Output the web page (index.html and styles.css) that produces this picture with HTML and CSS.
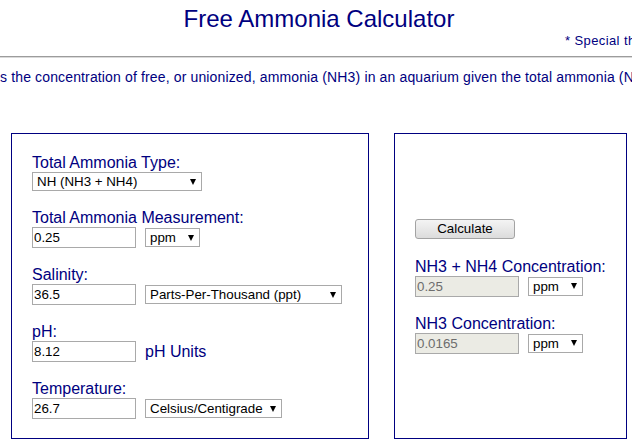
FILE: index.html
```html
<!DOCTYPE html>
<html lang="en">
<head>
<meta charset="utf-8">
<title>Free Ammonia Calculator</title>
<link rel="stylesheet" href="styles.css">
</head>
<body>
<h1 class="title">Free Ammonia Calculator</h1>
<p class="thanks">* Special thanks to the aquarium hobby community for the formulas used here.</p>
<hr class="rule">
<p class="intro"><span class="intro-lead">This calculator determine</span><span class="intro-rest">s the concentration of free, or unionized, ammonia (NH3) in an aquarium given the total ammonia (NH3 + NH4), pH, salinity and temperature.</span></p>

<div class="panels">
  <form class="panel panel-inputs">
    <div class="field">
      <label class="label">Total Ammonia Type:</label>
      <div class="row">
        <span class="sel"><select class="select w-type"><option>NH (NH3 + NH4)</option></select></span>
      </div>
    </div>
    <div class="field">
      <label class="label">Total Ammonia Measurement:</label>
      <div class="row">
        <input class="input" type="text" value="0.25">
        <span class="sel"><select class="select w-unit"><option>ppm</option></select></span>
      </div>
    </div>
    <div class="field">
      <label class="label">Salinity:</label>
      <div class="row">
        <input class="input" type="text" value="36.5">
        <span class="sel"><select class="select w-sal"><option>Parts-Per-Thousand (ppt)</option></select></span>
      </div>
    </div>
    <div class="field">
      <label class="label">pH:</label>
      <div class="row">
        <input class="input" type="text" value="8.12">
        <span class="unit-text">pH Units</span>
      </div>
    </div>
    <div class="field">
      <label class="label">Temperature:</label>
      <div class="row">
        <input class="input" type="text" value="26.7">
        <span class="sel"><select class="select w-temp"><option>Celsius/Centigrade</option></select></span>
      </div>
    </div>
  </form>

  <div class="panel panel-results">
    <button class="btn" type="button">Calculate</button>
    <div class="field">
      <label class="label">NH3 + NH4 Concentration:</label>
      <div class="row">
        <input class="input input-ro" type="text" value="0.25" readonly>
        <span class="sel"><select class="select w-unit"><option>ppm</option></select></span>
      </div>
    </div>
    <div class="field">
      <label class="label">NH3 Concentration:</label>
      <div class="row">
        <input class="input input-ro" type="text" value="0.0165" readonly>
        <span class="sel"><select class="select w-unit"><option>ppm</option></select></span>
      </div>
    </div>
  </div>
</div>
</body>
</html>
```

FILE: styles.css
```css
body {
  margin: 0;
  overflow: hidden;
  font-family: "Liberation Sans", Arial, sans-serif;
  color: #000080;
  background: #ffffff;
}

.title {
  margin: 0;
  padding: 5px 0 0 6px;
  font-size: 24px;
  line-height: 28px;
  font-weight: normal;
  text-align: center;
}

.thanks {
  margin: 0;
  padding-left: 565px;
  font-size: 13px;
  line-height: 15px;
  letter-spacing: 0.4px;
  white-space: nowrap;
}

.rule {
  margin: 8px 0 0;
  height: 0;
  border: 0;
  border-top: 1px solid #9c9c9c;
  border-bottom: 1px solid #dadada;
}

.intro {
  display: flex;
  margin: 11px 0 0;
  font-size: 14px;
  line-height: 16px;
  letter-spacing: 0.14px;
  white-space: nowrap;
}

.intro-lead {
  display: flex;
  justify-content: flex-end;
  width: 0;
  overflow: visible;
}

.intro-rest {
  flex-shrink: 0;
}

.panels {
  display: flex;
  gap: 25px;
  margin-top: 48px;
  padding-left: 11px;
}

.panel {
  margin: 0;
  box-sizing: border-box;
  border: 1px solid #000080;
  display: flex;
  flex-direction: column;
  gap: 17px;
}

.panel-inputs {
  width: 358px;
  padding: 19px 20px;
}

.panel-results {
  width: 233px;
  padding: 0 20px;
  justify-content: center;
}

.field {
  display: flex;
  flex-direction: column;
}

.label {
  display: block;
  font-size: 16px;
  line-height: 19px;
}

.row {
  display: flex;
  align-items: center;
  gap: 9px;
}

.input {
  box-sizing: border-box;
  width: 104px;
  height: 21px;
  margin: 0;
  padding: 0 1px;
  border: 1px solid #a9a9a9;
  font-family: "Liberation Sans", Arial, sans-serif;
  font-size: 13.33px;
  color: #000000;
  background: #ffffff;
  outline: none;
}

.input-ro {
  background: #ebebe4;
  color: #6d6d6d;
}

.sel {
  position: relative;
  display: inline-flex;
}

.sel::after {
  content: "";
  position: absolute;
  right: 6px;
  top: 50%;
  margin-top: -3px;
  width: 0;
  height: 0;
  border-left: 3.5px solid transparent;
  border-right: 3.5px solid transparent;
  border-top: 6px solid #000000;
  pointer-events: none;
}

.select {
  -webkit-appearance: none;
  appearance: none;
  box-sizing: border-box;
  height: 19px;
  margin: 0;
  padding: 0 18px 0 4px;
  border: 1px solid #a9a9a9;
  border-radius: 0;
  background: #ffffff;
  font-family: "Liberation Sans", Arial, sans-serif;
  font-size: 13.33px;
  color: #000000;
}

.w-type { width: 170px; }
.w-unit { width: 55px; }
.w-sal { width: 197px; }
.w-temp { width: 137px; }

.unit-text {
  font-size: 16px;
  line-height: 19px;
}

.btn {
  box-sizing: border-box;
  width: 100px;
  height: 20px;
  margin: 0 0 1px;
  padding: 0;
  border: 1px solid #a3a3a3;
  border-radius: 3px;
  background: linear-gradient(#f4f4f4, #e8e8e8 50%, #dcdcdc);
  font-family: "Liberation Sans", Arial, sans-serif;
  font-size: 13.33px;
  color: #000000;
}
```
